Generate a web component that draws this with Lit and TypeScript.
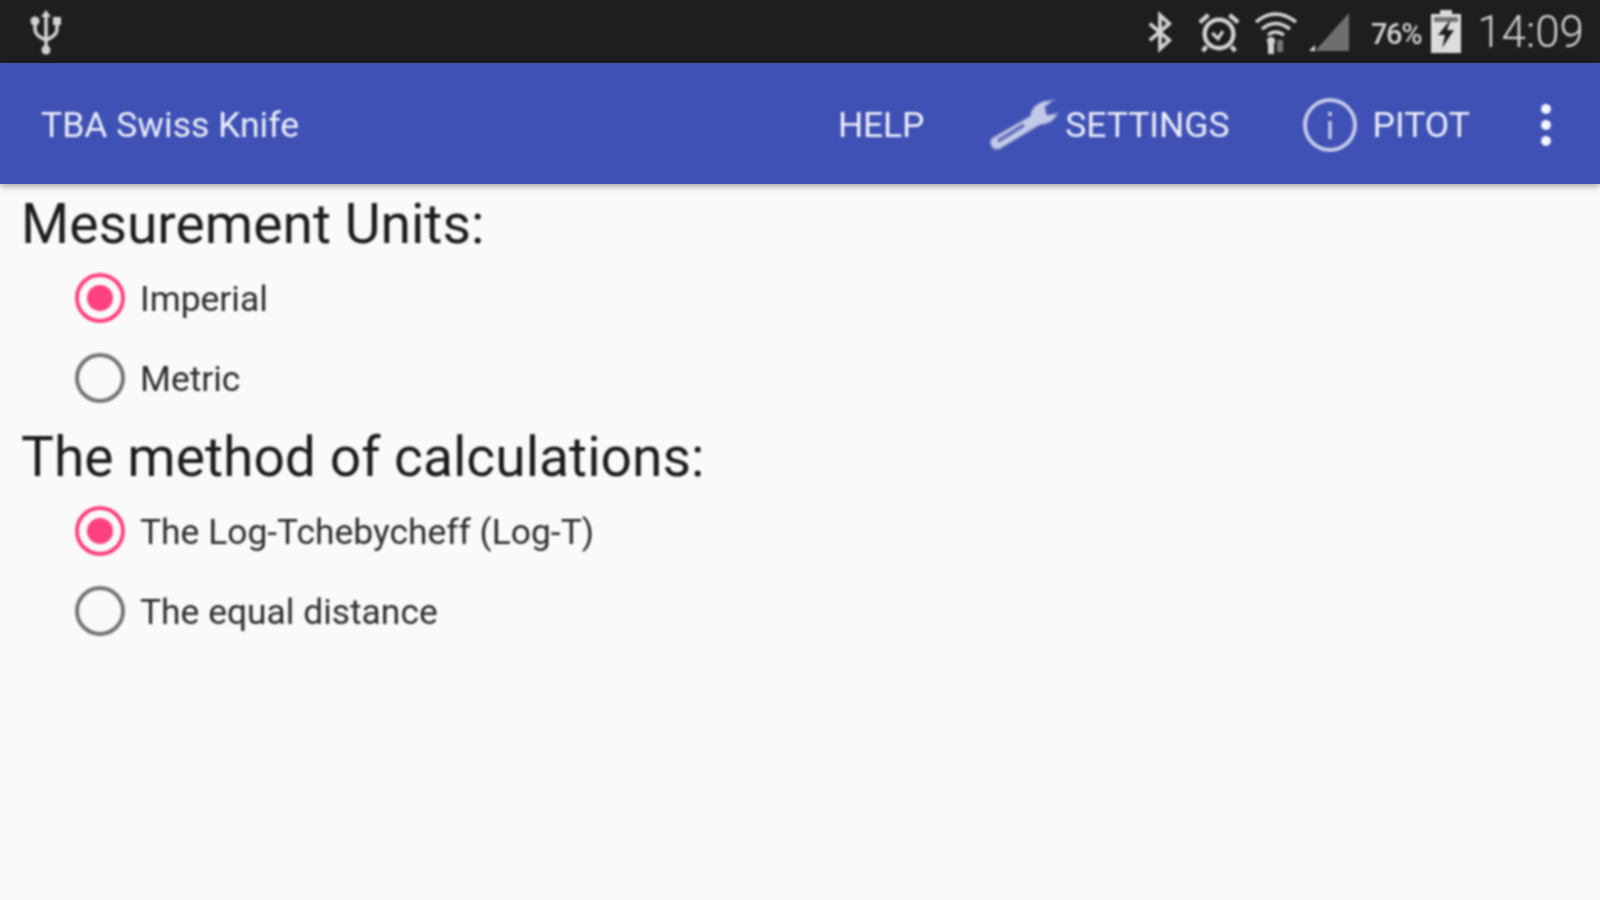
import { LitElement, html, css } from "lit";
import { customElement } from "lit/decorators.js";

@customElement("app-root")
export class AppRoot extends LitElement {
  static styles = css`
    :host { display: block; width: 1600px; height: 900px; overflow: hidden; background: #fafafa; font-family: Roboto, "Noto Sans", sans-serif; }
    .page { width: 1600px; height: 900px; display: flex; flex-direction: column; }
    .status > *, .bar > *, main { filter: blur(0.85px); }
    .status { height: 63px; flex: none; background: #1e1e1e; display: flex; align-items: center; color: #d4d4d4; padding: 0 16px 0 30px; box-sizing: border-box; }
    .status svg { display: block; flex: none; }
    .spacer { flex: 1; }
    .pct { font-size: 29px; font-weight: 500; letter-spacing: -1.4px; margin-left: 20px; margin-top: 4px; }
    .clock { font-size: 44px; font-weight: 300; margin-left: 15px; }
    .bar { height: 121px; flex: none; background: #3f51b5; display: flex; align-items: center; color: #eceef9; box-shadow: 0 3px 6px rgba(0,0,0,.3); position: relative; z-index: 1; padding: 2px 41px 0; box-sizing: border-box; }
    .title { font-size: 35.5px; flex: 1; }
    .action { font-size: 35.5px; }
    .action.help { letter-spacing: -0.2px; margin-right: 64px; }
    .action.settings { margin: 0 72px 0 5px; }
    .action.pitot { margin: 0 71px 0 15px; }
    .dots { display: flex; flex-direction: column; gap: 6px; margin-right: 8px; }
    .dots i { display: block; width: 10px; height: 10px; border-radius: 50%; background: #f5f5ff; }
    main { padding: 9px 0 0 21px; color: #262626; }
    h2 { margin: 0; font-size: 55.2px; font-weight: 400; line-height: 62px; color: #1c1c1c; }
    .group { padding: 3px 0 8px 54px; }
    .row { display: flex; align-items: center; height: 80px; gap: 15px; font-size: 35.4px; color: #2c2c2c; }
    .label { padding-top: 2px; }
    .radio { width: 50px; height: 50px; box-sizing: border-box; border-radius: 50%; border: 4px solid #757575; display: flex; align-items: center; justify-content: center; flex: none; }
    .radio.on { border-color: #ff4081; }
    .radio.on::after { content: ""; width: 26px; height: 26px; border-radius: 50%; background: #ff4081; }
  `;

  private radio(label: string, on: boolean) {
    return html`<div class="row"><span class="radio ${on ? "on" : ""}"></span><span class="label">${label}</span></div>`;
  }

  render() {
    return html`<div class="page">
      <div class="status">
        <svg width="32" height="46" viewBox="0 0 32 46" fill="none" stroke="#d4d4d4" stroke-width="3.5">
          <path d="M16 4V40M5 14V20Q5 27 16 31Q27 27 27 20V14"/>
          <circle cx="16" cy="41" r="4.5" fill="#d4d4d4" stroke="none"/>
          <path d="M16 1l5 7h-10z" fill="#d4d4d4" stroke="none"/>
          <circle cx="5" cy="12" r="4.5" fill="#d4d4d4" stroke="none"/>
          <rect x="23" y="8" width="8" height="8" fill="#d4d4d4" stroke="none"/>
        </svg>
        <span class="spacer"></span>
        <svg width="26" height="42" viewBox="0 0 28 42" fill="none" stroke="#d4d4d4" stroke-width="4"><path d="M3 12L24 30L14 39V3L24 12L3 30"/></svg>
        <svg style="margin-left:24px" width="44" height="46" viewBox="0 0 46 46" fill="none" stroke="#d4d4d4" stroke-width="4.5">
          <circle cx="23" cy="25" r="15"/><path d="M16 24l6 6 5-8" stroke-width="3.5"/>
          <path d="M3 13L12 5M43 13L34 5M10 38l-4 5M36 38l4 5" stroke-width="4.5"/>
        </svg>
        <svg style="margin-left:13px" width="44" height="48" viewBox="0 0 44 48" fill="none" stroke="#d4d4d4" stroke-width="3.5">
          <path d="M2 14Q21 -2 42 14M8 21Q21 10 36 21M14 27Q21 21 30 27"/>
          <circle cx="17" cy="33" r="4" fill="#d4d4d4" stroke="none"/>
          <path d="M17 33V46" stroke-width="6"/>
          <path d="M26 32V44" stroke="#777" stroke-width="6"/>
        </svg>
        <svg style="margin-left:9px" width="44" height="42" viewBox="0 0 44 42"><path d="M42 2V40H8Z" fill="#6e6e6e"/><path d="M2 40L8 34V40Z" fill="#e0e0e0"/></svg>
        <span class="pct">76%</span>
        <svg style="margin-left:9px" width="32" height="44" viewBox="0 0 32 44">
          <path d="M10 0h12v4h9v39H1V4h9z" fill="#dcdcdc"/>
          <path d="M4 7h24v5H4z" fill="#777"/>
          <path d="M21 9L8 25h7l-3 13 12-18h-7z" fill="#1e1e1e"/>
        </svg>
        <span class="clock">14:09</span>
      </div>
      <div class="bar">
        <span class="title">TBA Swiss Knife</span>
        <span class="action help">HELP</span>
        <svg width="72" height="54" viewBox="0 0 72 54">
          <path d="M4 40L42 18Q44 6 56 3L66 2L57 9L59 17L70 15Q66 26 52 27L12 51Q6 53 3 48Q1 43 4 40Z" fill="#c3c9e8" stroke="#6f7ac0" stroke-width="1.5"/>
          <path d="M10 43L36 27" stroke="#6976c0" stroke-width="4"/>
        </svg>
        <span class="action settings">SETTINGS</span>
        <svg width="56" height="56" viewBox="0 0 56 56" fill="none">
          <circle cx="28" cy="28" r="25" stroke="#c3c9e8" stroke-width="4"/>
          <path d="M28 24V42" stroke="#c3c9e8" stroke-width="3.5"/>
          <circle cx="28" cy="17" r="2.2" fill="#c3c9e8"/>
        </svg>
        <span class="action pitot">PITOT</span>
        <span class="dots"><i></i><i></i><i></i></span>
      </div>
      <main>
        <h2>Mesurement Units:</h2>
        <div class="group">
          ${this.radio("Imperial", true)}
          ${this.radio("Metric", false)}
        </div>
        <h2>The method of calculations:</h2>
        <div class="group">
          ${this.radio("The Log-Tchebycheff (Log-T)", true)}
          ${this.radio("The equal distance", false)}
        </div>
      </main>
    </div>`;
  }
}
